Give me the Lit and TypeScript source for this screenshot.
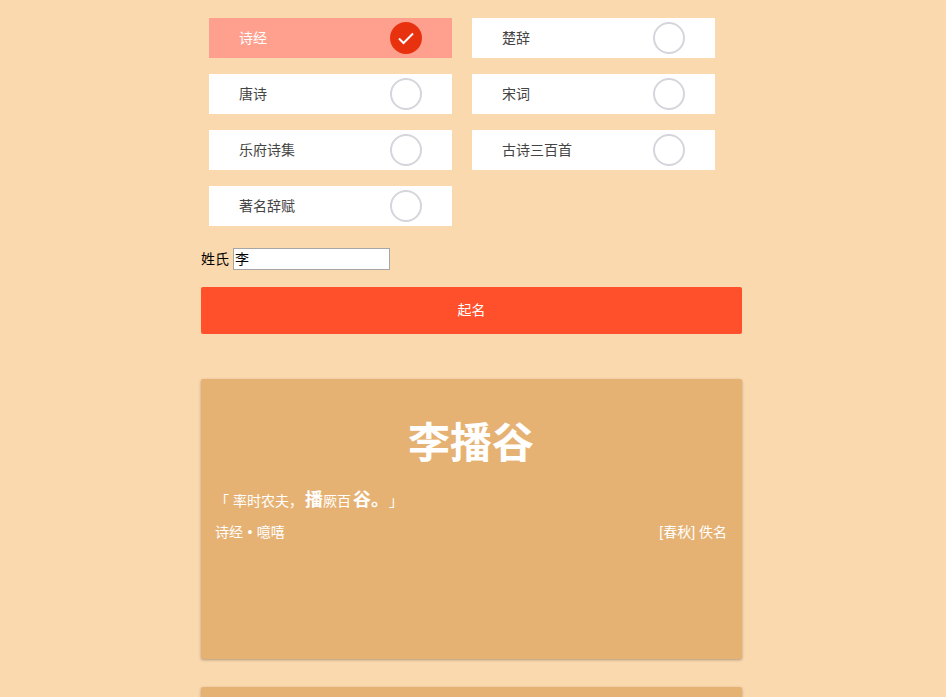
import { LitElement, html, css } from "lit";
import { customElement } from "lit/decorators.js";

const OPTIONS = [
  { name: "诗经", on: true },
  { name: "楚辞", on: false },
  { name: "唐诗", on: false },
  { name: "宋词", on: false },
  { name: "乐府诗集", on: false },
  { name: "古诗三百首", on: false },
  { name: "著名辞赋", on: false },
];

@customElement("app-root")
export class AppRoot extends LitElement {
  static styles = css`
    :host {
      display: block;
      height: 697px;
      overflow: hidden;
      background: #fbd9af;
      font-family: "Liberation Sans", "Noto Sans CJK SC", sans-serif;
      font-size: 14px;
      color: #000;
      text-spacing-trim: space-all;
    }
    .wrap {
      width: 541px;
      margin-left: 201px;
      padding-top: 18px;
    }
    .grid {
      display: grid;
      grid-template-columns: 243px 243px;
      column-gap: 20px;
      row-gap: 16px;
      padding-left: 8px;
    }
    .opt {
      height: 40px;
      background: #fff;
      color: #444;
      display: flex;
      align-items: center;
      justify-content: space-between;
      padding: 0 30px;
      box-sizing: border-box;
    }
    .opt-name {
      padding-bottom: 2px;
    }
    .opt.on {
      background: #ff9f8e;
      color: #fff;
    }
    .radio {
      width: 32px;
      height: 32px;
      box-sizing: border-box;
      border: 2px solid #d5d6dc;
      border-radius: 50%;
      display: flex;
      align-items: center;
      justify-content: center;
    }
    .opt.on .radio {
      background: #e8320f;
      border-color: #e8320f;
    }
    .name-row {
      display: flex;
      align-items: center;
      gap: 4px;
      margin-top: 22px;
      height: 22px;
    }
    label {
      padding-bottom: 2px;
    }
    input {
      width: 157px;
      height: 22px;
      box-sizing: border-box;
      border: 1px solid #a6a6a6;
      padding: 0 1px 2px;
      margin: 0;
      font: inherit;
      color: #000;
      background: #fff;
      outline: none;
    }
    button {
      display: block;
      width: 100%;
      height: 47px;
      margin-top: 17px;
      border: 0;
      border-radius: 2px;
      background: #ff4f2b;
      color: #fff;
      font: inherit;
      padding: 0 0 4px;
    }
    .card {
      height: 280px;
      box-sizing: border-box;
      background: #e6b273;
      border-radius: 2px;
      box-shadow: 0 1px 3px rgba(0, 0, 0, 0.3);
      padding: 0 15px 0 14px;
      color: #fff;
    }
    .first {
      margin-top: 45px;
    }
    .card + .card {
      margin-top: 28px;
    }
    h1 {
      margin: 0;
      padding-top: 38px;
      font-size: 42px;
      line-height: 54px;
      font-weight: 700;
      text-align: center;
    }
    .quote {
      margin-top: 17px;
      line-height: 24px;
      height: 24px;
      white-space: pre;
    }
    .quote b {
      font-size: 18px;
      margin-left: 2px;
    }
    .meta {
      display: flex;
      justify-content: space-between;
      margin-top: 10px;
      line-height: 20px;
    }
    .work {
      word-spacing: 0.5px;
    }
  `;

  render() {
    return html`
      <div class="wrap">
        <div class="grid">
          ${OPTIONS.map(
            (o) => html`
              <div class="opt ${o.on ? "on" : ""}">
                <span class="opt-name">${o.name}</span>
                <span class="radio">
                  ${o.on
                    ? html`<svg width="16" height="13" viewBox="0 0 16 13" fill="none" stroke="#fff" stroke-width="2">
                        <path d="M1 6.5 L5.5 11 L15 1.5" />
                      </svg>`
                    : ""}
                </span>
              </div>
            `
          )}
        </div>
        <div class="name-row">
          <label for="surname">姓氏</label>
          <input id="surname" .value=${"李"} />
        </div>
        <button>起名</button>
        <section class="card first">
          <h1>李播谷</h1>
          <div class="quote">「 率时农夫，<b>播</b>厥百<b>谷。</b>」</div>
          <div class="meta"><span class="work">诗经 • 噫嘻</span><span>[春秋] 佚名</span></div>
        </section>
        <section class="card"></section>
      </div>
    `;
  }
}
